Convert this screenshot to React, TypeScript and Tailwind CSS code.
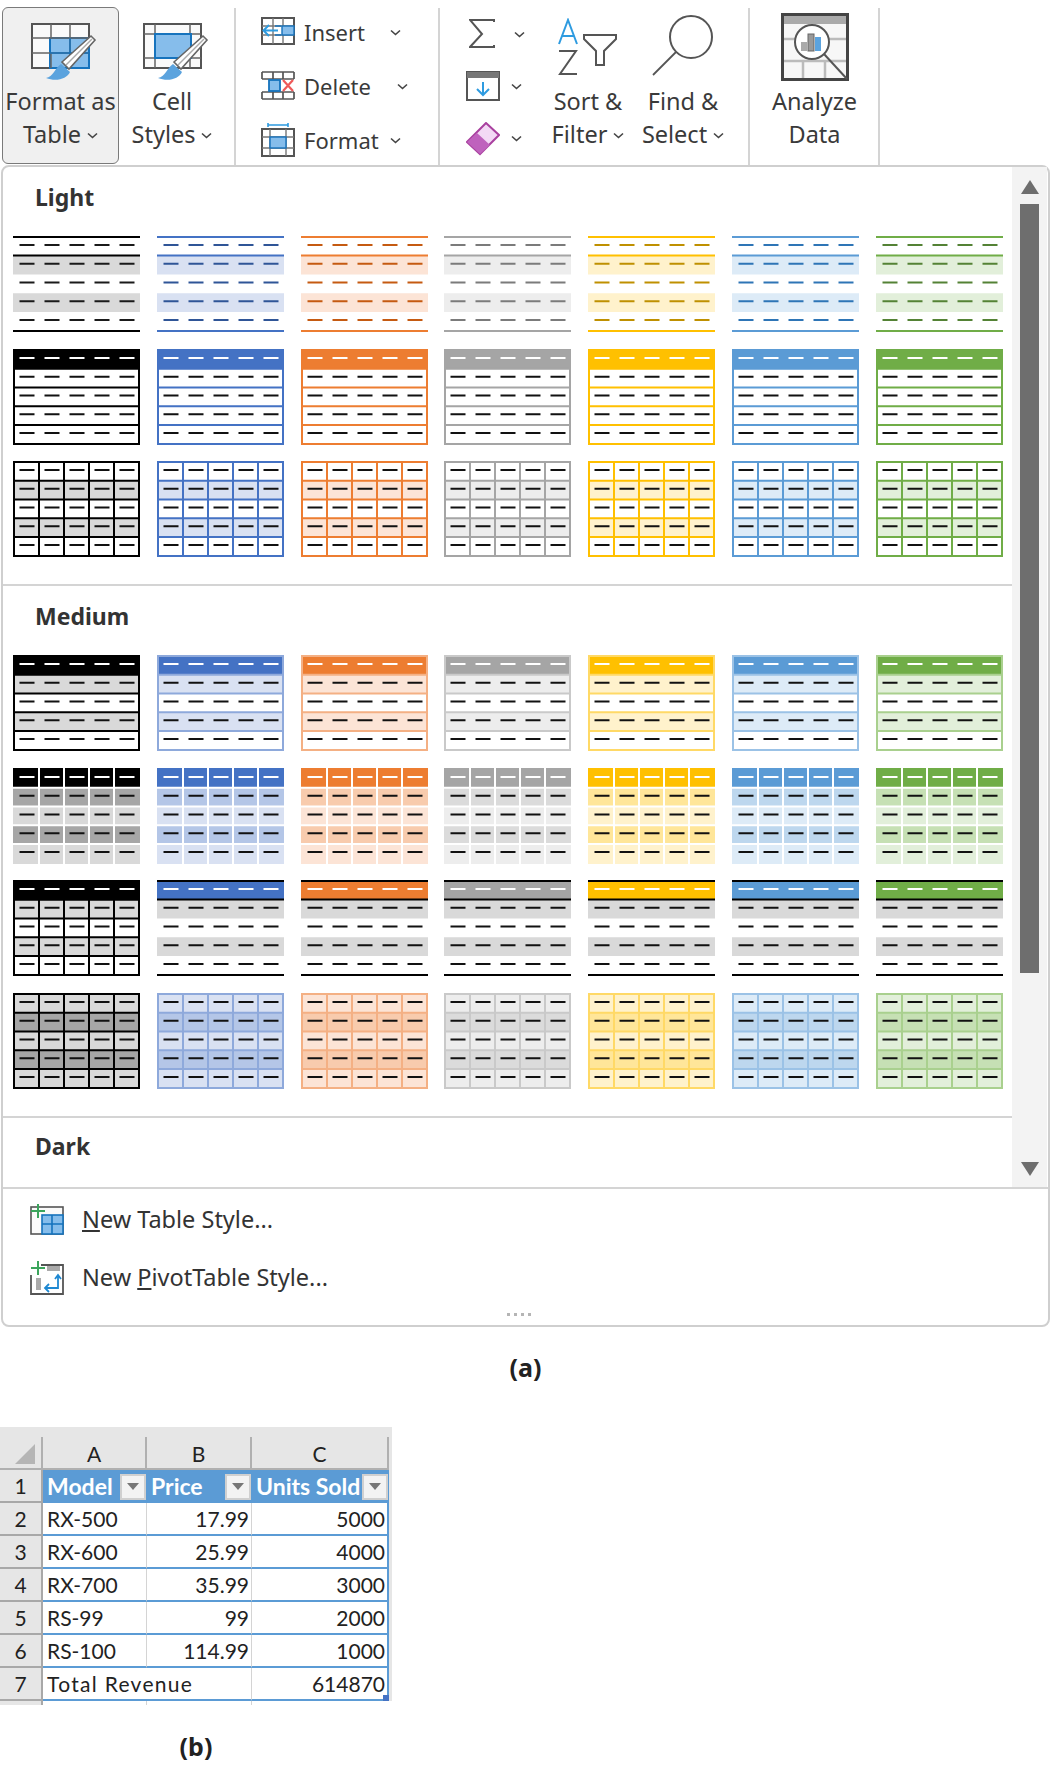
import type { ReactNode } from "react";

type Accent = { c: string; t1: string; t2: string; b: string; d: string };

interface SwatchSpec {
  fills: (string | null)[];
  dashes: string[];
  outer?: string;
  hLines?: string;
  vLines?: string;
  edges?: string;
  headerLine?: string;
}

const ACCENTS: Accent[] = [
  { c: "#000000", t1: "#D9D9D9", t2: "#A6A6A6", b: "#000000", d: "#1a1a1a" },
  { c: "#4472C4", t1: "#D9E1F2", t2: "#B4C6E7", b: "#8EA9DB", d: "#2F5597" },
  { c: "#ED7D31", t1: "#FCE4D6", t2: "#F8CBAD", b: "#F4B084", d: "#C55A11" },
  { c: "#A5A5A5", t1: "#EDEDED", t2: "#DBDBDB", b: "#C9C9C9", d: "#7B7B7B" },
  { c: "#FFC000", t1: "#FFF2CC", t2: "#FFE699", b: "#FFD966", d: "#BF9000" },
  { c: "#5B9BD5", t1: "#DDEBF7", t2: "#BDD7EE", b: "#9BC2E6", d: "#2E75B6" },
  { c: "#70AD47", t1: "#E2EFDA", t2: "#C6E0B4", b: "#A9D08E", d: "#548235" },
];

const INK = "#111111";
const inkWithWhiteHead = ["#ffffff", INK, INK, INK, INK];
const allInk = [INK, INK, INK, INK, INK];

// light styles
const light1 = (a: Accent): SwatchSpec => ({
  fills: [null, a.t1, null, a.t1, null],
  dashes: [a.d, a.d, a.d, a.d, a.d],
  edges: a.c,
  headerLine: a.c,
});
const light2 = (a: Accent): SwatchSpec => ({
  fills: [a.c, null, null, null, null],
  dashes: inkWithWhiteHead,
  outer: a.c,
  hLines: a.c,
});
const light3 = (a: Accent): SwatchSpec => ({
  fills: [null, a.t1, null, a.t1, null],
  dashes: allInk,
  outer: a.c,
  hLines: a.c,
  vLines: a.c,
});

// medium styles
const medium1 = (a: Accent): SwatchSpec => ({
  fills: [a.c, a.t1, null, a.t1, null],
  dashes: inkWithWhiteHead,
  outer: a.b,
  hLines: a.b,
});
const medium2 = (a: Accent): SwatchSpec => ({
  fills: [a.c, a.t2, a.t1, a.t2, a.t1],
  dashes: inkWithWhiteHead,
  hLines: "#ffffff",
  vLines: "#ffffff",
});
const medium3 = (a: Accent, i: number): SwatchSpec =>
  i === 0
    ? {
        fills: [a.c, a.t1, null, a.t1, null],
        dashes: inkWithWhiteHead,
        outer: "#000000",
        hLines: "#000000",
        vLines: "#000000",
      }
    : {
        fills: [a.c, "#D9D9D9", null, "#D9D9D9", null],
        dashes: inkWithWhiteHead,
        edges: "#000000",
        headerLine: "#000000",
      };
const medium4 = (a: Accent): SwatchSpec => ({
  fills: [a.t1, a.t2, a.t1, a.t2, a.t1],
  dashes: allInk,
  outer: a.b,
  hLines: a.b,
  vLines: a.b,
});

const LIGHT = [light1, light2, light3].flatMap((f) => ACCENTS.map((a) => f(a)));
const MEDIUM = [medium1, medium2, medium3, medium4].flatMap((f) =>
  ACCENTS.map((a, i) => f(a, i))
);

const rowY = (i: number) => (i === 0 ? 0 : i === 5 ? 96 : 1 + 18.75 * i);

function Swatch({ s }: { s: SwatchSpec }) {
  return (
    <svg width="127" height="96" viewBox="0 0 127 96" className="block">
      {s.fills.map((f, i) =>
        f ? <rect key={i} x="0" y={rowY(i)} width="127" height={rowY(i + 1) - rowY(i)} fill={f} /> : null
      )}
      {s.hLines && [1, 2, 3, 4].map((i) => <rect key={i} x="0" y={rowY(i) - 1} width="127" height="2" fill={s.hLines} />)}
      {s.vLines && [1, 2, 3, 4].map((j) => <rect key={j} x={25 * j} y="0" width="2" height="96" fill={s.vLines} />)}
      {s.outer && <rect x="1" y="1" width="125" height="94" fill="none" stroke={s.outer} strokeWidth="2" />}
      {s.edges && (
        <>
          <rect x="0" y="0" width="127" height="2" fill={s.edges} />
          <rect x="0" y="94" width="127" height="2" fill={s.edges} />
        </>
      )}
      {s.headerLine && <rect x="0" y="18.5" width="127" height="2" fill={s.headerLine} />}
      {s.dashes.map((d, i) =>
        [0, 1, 2, 3, 4].map((j) => (
          <rect key={`${i}-${j}`} x={6.5 + 25 * j} y={8 + 18.75 * i} width="15" height="2" fill={d} />
        ))
      )}
    </svg>
  );
}

function Chevron({ className = "" }: { className?: string }) {
  return (
    <svg width="11" height="7" viewBox="0 0 11 7" className={className}>
      <path d="M1 1.5 L5.5 5.5 L10 1.5" fill="none" stroke="#444" strokeWidth="1.6" />
    </svg>
  );
}

function Brush({ x, y }: { x: number; y: number }) {
  return (
    <g transform={`translate(${x} ${y})`}>
      <path d="M0 42 C7 41 9 32 15 28 L24 36 C21 43 10 46 0 42 Z" fill="#5BA3DE" />
      <path d="M16 26 L45 0 L49 4 L23 33 Z" fill="#fff" stroke="#666" strokeWidth="1.6" />
      <path d="M20 29 L46 3" stroke="#aaa" strokeWidth="1.5" />
    </g>
  );
}

function FormatTableIcon() {
  return (
    <svg width="66" height="60" viewBox="0 0 66 60">
      <rect x="1" y="2" width="57" height="44" fill="#fafafa" stroke="#555" strokeWidth="2" />
      <rect x="19" y="16" width="39" height="30" fill="#86BDEB" stroke="#1673BD" strokeWidth="2" />
      <path d="M20 2V16M39 2V46M1 16H58M1 31H58M20 31V46" stroke="#666" strokeWidth="1.5" fill="none" />
      <path d="M19 31H58M39 16V46" stroke="#1673BD" strokeWidth="1.5" />
      <Brush x={15} y={14} />
    </svg>
  );
}

function CellStylesIcon() {
  return (
    <svg width="66" height="60" viewBox="0 0 66 60">
      <rect x="1" y="2" width="57" height="44" fill="#fafafa" stroke="#555" strokeWidth="2" />
      <path d="M1 12H58M12 2V46M1 36H58M47 2V12M47 36V46" stroke="#666" strokeWidth="1.5" fill="none" />
      <rect x="12" y="12" width="36" height="24" fill="#86BDEB" stroke="#1673BD" strokeWidth="2" />
      <Brush x={15} y={14} />
    </svg>
  );
}

function InsertIcon() {
  return (
    <svg width="35" height="30" viewBox="0 0 35 30">
      <rect x="1" y="1" width="32" height="26" fill="#fff" stroke="#555" strokeWidth="2" />
      <path d="M1 9H33M1 18H33M12 1V27M22 1V27" stroke="#777" strokeWidth="1.4" />
      <rect x="21" y="9" width="12" height="9" fill="#86BDEB" stroke="#1673BD" strokeWidth="1.4" />
      <path d="M17 13.5H3M8 8L2.5 13.5L8 19" fill="none" stroke="#2E9BE0" strokeWidth="2" />
      <path d="M14 9H20M14 18H20" stroke="#1673BD" strokeWidth="1.4" />
    </svg>
  );
}

function DeleteIcon() {
  return (
    <svg width="35" height="30" viewBox="0 0 35 30">
      <path d="M1 1H33M1 28H33M1 1V8M33 1V8M1 21V28M33 21V28M12 1V8M22 1V8M12 21V28M22 21V28M1 8H33M1 21H33" stroke="#555" strokeWidth="1.7" fill="none" />
      <rect x="8" y="9" width="11" height="11" fill="#86BDEB" stroke="#1673BD" strokeWidth="1.8" />
      <path d="M22 9L32 20M32 9L22 20" stroke="#EE5A5A" strokeWidth="2.2" />
    </svg>
  );
}

function FormatIcon() {
  return (
    <svg width="35" height="34" viewBox="0 0 35 34">
      <path d="M7 2H27M7 0V4M27 0V4" stroke="#2E9BE0" strokeWidth="1.6" />
      <rect x="1" y="6" width="32" height="27" fill="#fff" stroke="#555" strokeWidth="2" />
      <path d="M1 14H33M1 25H33M9 6V33M25 6V33" stroke="#777" strokeWidth="1.4" />
      <rect x="9" y="14" width="16" height="11" fill="#86BDEB" stroke="#1673BD" strokeWidth="1.4" />
    </svg>
  );
}

function SigmaIcon() {
  return (
    <svg width="26" height="30" viewBox="0 0 26 30">
      <path d="M25 3V1H1L13 15L1 28H25V26" fill="none" stroke="#555" strokeWidth="2" />
    </svg>
  );
}

function FillIcon() {
  return (
    <svg width="34" height="30" viewBox="0 0 34 30">
      <rect x="1" y="1" width="32" height="28" fill="#fff" stroke="#555" strokeWidth="2" />
      <rect x="1" y="1" width="32" height="6" fill="#777" />
      <path d="M17 11V23M11 18L17 24L23 18" fill="none" stroke="#2E9BE0" strokeWidth="2" />
    </svg>
  );
}

function EraserIcon() {
  return (
    <svg width="34" height="34" viewBox="0 0 34 34">
      <path d="M20 1L33 13L14 32L1 20Z" fill="#F3D9F5" stroke="#A9409F" strokeWidth="2" />
      <path d="M11 11L24 23L14 32L1 20Z" fill="#BF62BD" />
    </svg>
  );
}

function SortIcon() {
  return (
    <svg width="64" height="60" viewBox="0 0 64 60">
      <path d="M2 26L11 2L20 26M5 18H17" fill="none" stroke="#2E9BE0" strokeWidth="2" />
      <path d="M2 33H19L3 56H20" fill="none" stroke="#555" strokeWidth="2" />
      <path d="M27 17H59V21L47 33V47H39V33L27 21Z" fill="#fff" stroke="#555" strokeWidth="2" />
    </svg>
  );
}

function FindIcon() {
  return (
    <svg width="66" height="66" viewBox="0 0 66 66">
      <circle cx="40" cy="23" r="21" fill="#fff" stroke="#555" strokeWidth="2" />
      <path d="M25 38L2 61" stroke="#555" strokeWidth="1.8" />
    </svg>
  );
}

function AnalyzeIcon() {
  return (
    <svg width="68" height="68" viewBox="0 0 68 68">
      <rect x="1.5" y="1.5" width="65" height="65" fill="#f7f7f7" stroke="#444" strokeWidth="3" />
      <rect x="3" y="3" width="62" height="8" fill="#aaa" />
      <path d="M3 26H65M3 48H65M22 48V65M44 48V65" stroke="#bbb" strokeWidth="2.5" />
      <circle cx="31" cy="29" r="17" fill="#fff" stroke="#555" strokeWidth="2" />
      <rect x="20" y="29" width="6" height="9" fill="#aaa" />
      <rect x="27" y="21" width="6" height="17" fill="#999" stroke="#666" strokeWidth="1" />
      <rect x="34" y="24" width="6" height="14" fill="#5BA3DE" />
      <path d="M43 41L66 66" stroke="#555" strokeWidth="2" />
    </svg>
  );
}

function NewTableIcon() {
  return (
    <svg width="34" height="32" viewBox="0 0 34 32">
      <rect x="1" y="3" width="32" height="27" fill="#fafafa" stroke="#555" strokeWidth="1.6" />
      <rect x="12" y="11" width="21" height="19" fill="#86BDEB" stroke="#1673BD" strokeWidth="1.6" />
      <path d="M22 11V30M12 20H33" stroke="#1673BD" strokeWidth="1.6" />
      <path d="M8 0V14M1 7H15" stroke="#3BA55C" strokeWidth="2" />
    </svg>
  );
}

function NewPivotIcon() {
  return (
    <svg width="34" height="34" viewBox="0 0 34 34">
      <path d="M11 4H33V33H1V14" fill="#fff" stroke="#555" strokeWidth="1.8" />
      <rect x="17" y="5" width="13" height="5" fill="#aaa" />
      <rect x="6" y="17" width="5" height="12" fill="#aaa" />
      <path d="M28 15V27H15M25 18L28 14L31 18M19 23L15 27L19 31" fill="none" stroke="#1E88D2" strokeWidth="1.8" />
      <path d="M8 0V14M1 7H15" stroke="#3BA55C" strokeWidth="2" />
    </svg>
  );
}

function LargeButton({ icon, lines, active, className = "", iconClass = "" }: { icon: ReactNode; lines: ReactNode[]; active?: boolean; className?: string; iconClass?: string }) {
  return (
    <div
      className={`flex flex-col items-center h-[157px] rounded-[6px] border-[1.5px] text-[23.5px] ${
        active ? "bg-[#f0f0f0] border-[#7a7a7a]" : "border-transparent"
      } ${className}`}
    >
      <div className={`flex items-start justify-center ${iconClass}`}>{icon}</div>
      {lines.map((l, i) => (
        <div key={i} className="flex items-center gap-[6px] h-[33px] whitespace-nowrap">
          {l}
        </div>
      ))}
    </div>
  );
}

function SmallRow({ icon, label, chevronGap }: { icon: ReactNode; label: string; chevronGap: string }) {
  return (
    <div className="flex items-center h-[54px]">
      <div className="w-[35px] flex justify-center">{icon}</div>
      <span className="ml-[8px] whitespace-nowrap">{label}</span>
      <Chevron className={chevronGap} />
    </div>
  );
}

function Ribbon() {
  return (
    <div className="flex h-[165px] text-[22px] text-[#3a3a3a] font-['Noto_Sans',sans-serif]">
      <div className="flex w-[236px] border-r-2 border-[#d4d4d4] mt-[8px] pl-[2px]">
        <LargeButton
          active
          className="w-[117px] -mt-[1px]"
          iconClass="h-[77.5px] pt-[14px] pl-[6px]"
          icon={<FormatTableIcon />}
          lines={["Format as", <>Table <Chevron /></>]}
        />
        <LargeButton
          className="w-[106px] -mt-[1px]"
          iconClass="h-[77.5px] pt-[14px] pl-[7px]"
          icon={<CellStylesIcon />}
          lines={["Cell", <>Styles <Chevron /></>]}
        />
      </div>
      <div className="flex flex-col w-[204px] border-r-2 border-[#d4d4d4] mt-[8px] pl-[25px]">
        <div className="-mt-[3px]">
          <SmallRow icon={<InsertIcon />} label="Insert" chevronGap="ml-[25px]" />
          <SmallRow icon={<DeleteIcon />} label="Delete" chevronGap="ml-[26px]" />
          <SmallRow icon={<FormatIcon />} label="Format" chevronGap="ml-[11px]" />
        </div>
      </div>
      <div className="flex w-[310px] border-r-2 border-[#d4d4d4] mt-[8px]">
        <div className="flex flex-col w-[100px] pl-[26px]">
          <div className="flex items-center h-[53px] gap-[19px] pl-[3px]"><SigmaIcon /><Chevron /></div>
          <div className="flex items-center h-[53px] gap-[11px]"><FillIcon /><Chevron /></div>
          <div className="flex items-center h-[53px] gap-[11px]"><EraserIcon /><Chevron /></div>
        </div>
        <LargeButton
          className="w-[96px]"
          iconClass="h-[76.5px] pt-[9px] pl-[2px]"
          icon={<SortIcon />}
          lines={["Sort &", <>Filter <Chevron /></>]}
        />
        <LargeButton
          className="w-[94px]"
          iconClass="h-[76.5px] pt-[5px] pl-[1px]"
          icon={<FindIcon />}
          lines={["Find &", <>Select <Chevron /></>]}
        />
      </div>
      <div className="flex w-[130px] border-r-2 border-[#d4d4d4] mt-[8px] pl-[1px]">
        <LargeButton
          className="w-[127px]"
          iconClass="h-[76.5px] pt-[3.5px]"
          icon={<AnalyzeIcon />}
          lines={["Analyze", "Data"]}
        />
      </div>
    </div>
  );
}

function Heading({ children, className = "pt-[11px]" }: { children: ReactNode; className?: string }) {
  return (
    <div className={`h-[69px] pl-[32px] text-[23px] leading-[38px] font-bold text-[#333333] ${className}`}>{children}</div>
  );
}

function SwatchGrid({ items }: { items: SwatchSpec[] }) {
  return (
    <div className="grid grid-cols-[repeat(7,127px)] gap-x-[16.83px] gap-y-[16.5px] pl-[10px]">
      {items.map((s, i) => (
        <Swatch key={i} s={s} />
      ))}
    </div>
  );
}

function ScrollBar() {
  return (
    <div className="flex flex-col items-center w-[35px] bg-[#f3f3f3] shrink-0 pt-[12px]">
      <svg width="20" height="16" viewBox="0 0 20 16"><path d="M10 1L19 15H1Z" fill="#6e6e6e" /></svg>
      <div className="w-[19px] h-[769px] mt-[9px] bg-[#6e6e6e]" />
      <div className="mt-[188px]">
        <svg width="20" height="16" viewBox="0 0 20 16"><path d="M10 15L19 1H1Z" fill="#6e6e6e" /></svg>
      </div>
    </div>
  );
}

function Gallery() {
  return (
    <div className="relative z-10 mx-[1px] w-[1049px] h-[1162px] border-2 border-[#cfcfcf] rounded-[8px] bg-white flex flex-col font-['Noto_Sans',sans-serif]">
      <div className="flex h-[1020px]">
        <div className="w-[1009px] shrink-0">
          <Heading>Light</Heading>
          <SwatchGrid items={LIGHT} />
          <div className="h-[2px] bg-[#d4d4d4] mt-[27px]" />
          <Heading>Medium</Heading>
          <SwatchGrid items={MEDIUM} />
          <div className="h-[2px] bg-[#d4d4d4] mt-[27px]" />
          <Heading className="pt-[9px]">Dark</Heading>
        </div>
        <ScrollBar />
      </div>
      <div className="h-[2px] bg-[#d4d4d4]" />
      <div className="flex-1 flex flex-col text-[23.5px] text-[#333333] pl-[27px] pt-[2px]">
        <div className="flex items-center h-[58px] gap-[18px]">
          <NewTableIcon />
          <span><span className="underline">N</span>ew Table Style...</span>
        </div>
        <div className="flex items-center h-[58px] gap-[18px]">
          <NewPivotIcon />
          <span>New <span className="underline">P</span>ivotTable Style...</span>
        </div>
        <div className="flex justify-center gap-[4px] pr-[40px] mt-[6px]">
          {[0, 1, 2, 3].map((i) => (
            <div key={i} className="w-[3px] h-[3px] bg-[#b5b5b5]" />
          ))}
        </div>
      </div>
    </div>
  );
}

const ROWS: [string, string, string][] = [
  ["RX-500", "17.99", "5000"],
  ["RX-600", "25.99", "4000"],
  ["RX-700", "35.99", "3000"],
  ["RS-99", "99", "2000"],
  ["RS-100", "114.99", "1000"],
];

const colHead = "flex items-center justify-center h-[33px] bg-[#e6e6e6] border-r-2 border-b-2 border-[#b0b0b0] text-[#222] pt-[2px]";
const rowHead = "flex items-center justify-center h-[33px] bg-[#e6e6e6] border-r-2 border-b-2 border-[#a8a8a8] text-[#222]";
const bodyCell = "flex items-center h-[33px] pl-[4px] pr-[2px] bg-white border-b-2 border-b-[#5B9BD5] text-[#222] overflow-hidden whitespace-nowrap";

function FilterButton() {
  return (
    <div className="ml-auto flex items-center justify-center w-[26px] h-[26px] bg-[#f3f3f3] border-2 border-[#d0d0d0] shrink-0">
      <svg width="12" height="7" viewBox="0 0 12 7"><path d="M0 0H12L6 7Z" fill="#777" /></svg>
    </div>
  );
}

function HeadCell({ label }: { label: string }) {
  return (
    <div className="flex items-center h-[33px] pl-[4px] pr-[1px] bg-[#5B9BD5] text-white font-bold text-[23px] whitespace-nowrap">
      <span>{label}</span>
      <FilterButton />
    </div>
  );
}

function Sheet() {
  return (
    <div className="w-[392px] font-['Lato',sans-serif] text-[21px] mt-[44px]">
      <div className="h-[10px] bg-[#e6e6e6]" />
      <div className="relative grid grid-cols-[43px_104px_105px_137px] w-[392px] bg-[#e6e6e6]">
        <div className={`${colHead} !justify-end pr-[6px]`}>
          <svg width="20" height="20" viewBox="0 0 20 20"><path d="M20 0V20H0Z" fill="#b5b5b5" /></svg>
        </div>
        <div className={colHead}>A</div>
        <div className={colHead}>B</div>
        <div className={colHead}>C</div>

        <div className={rowHead}>1</div>
        <HeadCell label="Model" />
        <HeadCell label="Price" />
        <HeadCell label="Units Sold" />

        {ROWS.map(([m, p, u], i) => (
          <div key={m} className="contents">
            <div className={rowHead}>{i + 2}</div>
            <div className={`${bodyCell} border-r border-r-[#d4d4d4]`}>{m}</div>
            <div className={`${bodyCell} justify-end border-r border-r-[#d4d4d4]`}>{p}</div>
            <div className={`${bodyCell} justify-end border-r-2 border-r-[#5B9BD5]`}>{u}</div>
          </div>
        ))}

        <div className={rowHead}>7</div>
        <div className={`${bodyCell} col-span-2 border-r border-r-[#d4d4d4] tracking-[1.3px]`}>Total Revenue</div>
        <div className={`${bodyCell} justify-end border-r-2 border-r-[#5B9BD5]`}>614870</div>
        <div className="absolute right-[3px] bottom-0 w-[6px] h-[6px] bg-[#4472C4]" />
      </div>
      <div className="grid grid-cols-[43px_104px_105px_137px] h-[4px]">
        <div className="bg-[#e6e6e6] border-r-2 border-[#a8a8a8]" />
        <div className="border-r border-[#d4d4d4]" />
        <div className="border-r border-[#d4d4d4]" />
        <div />
      </div>
    </div>
  );
}

export default function App() {
  return (
    <div className="w-[1051px] h-[1765px] overflow-hidden bg-white">
      <Ribbon />
      <Gallery />
      <div className="mt-[24px] text-center text-[25px] leading-[32px] font-bold text-[#222] font-['Noto_Sans',sans-serif]">(a)</div>
      <Sheet />
      <div className="w-[392px] text-center mt-[25px] text-[25px] leading-[32px] font-bold text-[#222] font-['Noto_Sans',sans-serif]">(b)</div>
    </div>
  );
}
